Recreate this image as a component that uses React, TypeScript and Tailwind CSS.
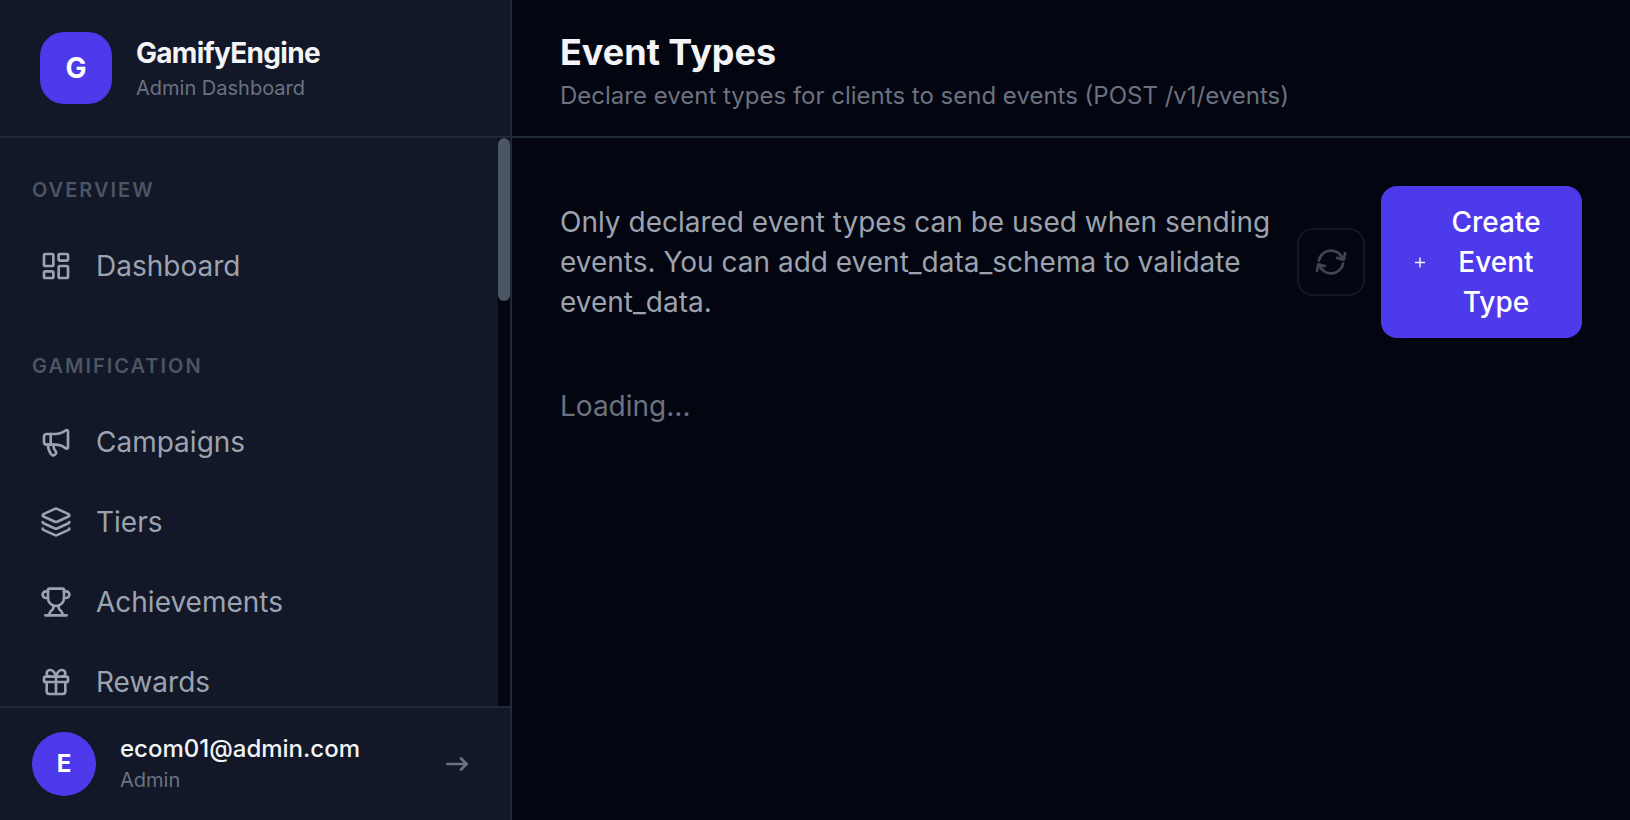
import { useState } from 'react'
import type { ReactNode } from 'react'
import { Gift, Layers, LayoutDashboard, Megaphone, Trophy } from 'lucide-react'

interface NavItem {
  label: string
  href: string
  icon: ReactNode
}

interface NavSection {
  title: string
  items: NavItem[]
}

const iconClass = 'w-8 h-8 shrink-0'

const sections: NavSection[] = [
  {
    title: 'Overview',
    items: [{ label: 'Dashboard', href: '#dashboard', icon: <LayoutDashboard className={iconClass} /> }],
  },
  {
    title: 'Gamification',
    items: [
      { label: 'Campaigns', href: '#campaigns', icon: <Megaphone className={iconClass} /> },
      { label: 'Tiers', href: '#tiers', icon: <Layers className={iconClass} /> },
      { label: 'Achievements', href: '#achievements', icon: <Trophy className={iconClass} /> },
      { label: 'Rewards', href: '#rewards', icon: <Gift className={iconClass} /> },
    ],
  },
]

function RefreshIcon() {
  return (
    <svg
      viewBox="0 0 24 24"
      fill="none"
      stroke="currentColor"
      strokeWidth="2.1"
      strokeLinecap="round"
      strokeLinejoin="round"
      className="w-8 h-8"
    >
      <path d="M2.9 10.8A9.3 9.3 0 0 1 20.6 9.2" />
      <path d="M16.6 8.9L21.5 10.2L22.5 5.4" />
      <path d="M21.1 13.2A9.3 9.3 0 0 1 3.4 14.8" />
      <path d="M7.4 15.1L2.5 13.8L1.5 18.6" />
    </svg>
  )
}

function PlusIcon() {
  return (
    <svg viewBox="0 0 13 13" fill="none" stroke="currentColor" strokeWidth="1.4" className="w-[13px] h-[13px]">
      <path d="M2 6.5H12" />
      <path d="M7 1.5V11.5" />
    </svg>
  )
}

function ArrowIcon() {
  return (
    <svg
      viewBox="0 0 26 26"
      fill="none"
      stroke="currentColor"
      strokeWidth="2.6"
      strokeLinecap="round"
      strokeLinejoin="round"
      className="w-[26px] h-[26px]"
    >
      <path d="M3.3 13H22.7" />
      <path d="M17 7.5L22.5 13L17 18.5" />
    </svg>
  )
}

function Sidebar() {
  return (
    <aside className="w-[512px] shrink-0 flex flex-col bg-[#121827] border-r-2 border-[#1f2937]">
      {/* Brand */}
      <div className="flex items-center gap-6 px-10 py-8 border-b-2 border-[#1f2937]">
        <div className="w-[72px] h-[72px] rounded-3xl bg-[#4c3aeb] flex items-center justify-center text-[28px] font-bold text-white">
          G
        </div>
        <div>
          <div className="text-[28px] leading-10 font-bold tracking-tight text-[#f3f4f6]">GamifyEngine</div>
          <div className="text-xl leading-[30px] text-[#6b7280]">Admin Dashboard</div>
        </div>
      </div>

      {/* Navigation */}
      <div className="flex flex-1 min-h-0">
        <nav className="flex-1 overflow-hidden px-4 pt-8">
          {sections.map((section) => (
            <div key={section.title} className="mb-11">
              <h2 className="px-4 text-xl leading-10 font-semibold uppercase tracking-widest text-[#4b5563]">
                {section.title}
              </h2>
              <ul className="mt-5 flex flex-col gap-2">
                {section.items.map((item) => (
                  <li key={item.label}>
                    <a
                      href={item.href}
                      className="flex items-center gap-6 px-6 py-4 rounded-xl text-[28px] leading-10 text-[#9ca3af] hover:bg-[#1f2937]"
                    >
                      {item.icon}
                      {item.label}
                    </a>
                  </li>
                ))}
              </ul>
            </div>
          ))}
        </nav>
        {/* Scroll track */}
        <div className="w-3 bg-[#030510]">
          <div className="h-[163px] rounded-full bg-[#4b5563]" />
        </div>
      </div>

      {/* Signed-in user */}
      <div className="flex items-center gap-6 px-8 py-6 border-t-2 border-[#1f2937]">
        <div className="w-16 h-16 rounded-full bg-[#4c3aeb] flex items-center justify-center text-2xl font-bold text-white">
          E
        </div>
        <div className="flex-1 min-w-0">
          <div className="text-2xl font-medium text-[#f3f4f6] truncate">ecom01@admin.com</div>
          <div className="text-xl leading-[30px] text-[#6b7280]">Admin</div>
        </div>
        <button type="button" aria-label="Sign out" className="p-2 text-[#6b7280] hover:text-[#9ca3af]">
          <ArrowIcon />
        </button>
      </div>
    </aside>
  )
}

function App() {
  const [loading] = useState(true)

  return (
    <div className="flex h-screen bg-[#030510] font-['Inter',sans-serif] [font-optical-sizing:none]">
      <Sidebar />

      <main className="flex-1 min-w-0 flex flex-col">
        <header className="px-12 pt-7 pb-6 border-b-2 border-[#1f2937]">
          <h1 className="text-4xl leading-12 font-bold text-[#f3f4f6]">Event Types</h1>
          <p className="mt-1 text-2xl text-[#6b7280]">
            Declare event types for clients to send events (POST /v1/events)
          </p>
        </header>

        <div className="p-12">
          <div className="flex items-center gap-4">
            <p className="flex-1 text-[28px] leading-10 text-[#9ca3af]">
              Only declared event types can be used when sending events. You can add event_data_schema to validate
              event_data.
            </p>
            <button
              type="button"
              aria-label="Refresh"
              disabled={loading}
              className="p-4 border-2 border-[#29323f] rounded-2xl text-[#9ca3af] disabled:opacity-40"
            >
              <RefreshIcon />
            </button>
            <button
              type="button"
              className="flex items-center gap-4 px-8 py-4 rounded-2xl bg-[#4c3aeb] text-[28px] leading-10 font-medium text-white hover:bg-[#6366f1]"
            >
              <PlusIcon />
              <span className="w-[108px]">Create Event Type</span>
            </button>
          </div>

          {loading && <p className="mt-12 text-[28px] leading-10 text-[#6b7280]">Loading...</p>}
        </div>
      </main>
    </div>
  )
}

export default App
